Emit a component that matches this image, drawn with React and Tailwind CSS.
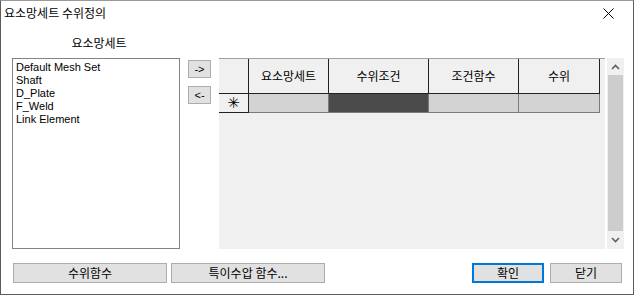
import React from 'react';

const font = { fontFamily: '"Noto Sans CJK KR", "Noto Sans", sans-serif' };

const items = ['Default Mesh Set', 'Shaft', 'D_Plate', 'F_Weld', 'Link Element'];
const cols = [
  { label: '요소망세트', w: 'w-[80px]', cell: 'bg-[#d3d3d3]' },
  { label: '수위조건', w: 'w-[100px]', cell: 'bg-[#4b4b4b]' },
  { label: '조건함수', w: 'w-[90px]', cell: 'bg-[#d3d3d3]' },
  { label: '수위', w: 'w-[81px]', cell: 'bg-[#d3d3d3]' },
];

function SmallBtn({ children }) {
  return (
    <div className="w-[23px] h-[18px] bg-[#e1e1e1] border border-[#adadad] flex items-center justify-center text-[11px] leading-none text-black font-['Liberation_Sans',sans-serif]">
      {children}
    </div>
  );
}

function Btn({ children, w, primary }) {
  return (
    <div
      className={
        'h-[20px] bg-[#e1e1e1] flex items-center justify-center text-[12px] text-black ' +
        w +
        (primary ? ' border-2 border-[#0078d7]' : ' border border-[#adadad]')
      }
    >
      {children}
    </div>
  );
}

export default function App() {
  return (
    <div className="w-[634px] h-[295px] bg-white border-x border-b border-x-[#5c5c5c] border-b-[#5c5c5c] border-t border-t-[#9a9a9a] flex flex-col text-black" style={font}>
      <div className="h-[24px] flex items-center justify-between pl-[3px] pr-[19px] shrink-0">
        <span className="text-[12px] leading-none">요소망세트 수위정의</span>
        <svg width="11" height="11" viewBox="0 0 11 11">
          <path d="M0.5 0.5 L10.5 10.5 M10.5 0.5 L0.5 10.5" stroke="#000" strokeWidth="1" />
        </svg>
      </div>

      <div className="flex items-start pl-[11px]">
        <div className="w-[168px] flex flex-col pt-[10px]">
          <div className="h-[16px] text-[12px] leading-[16px] text-center pl-[6px]">요소망세트</div>
          <div className="mt-[7px] h-[191px] border border-[#828282] bg-white pl-[3px] pt-[2px] text-[11px] leading-[13px] font-['Liberation_Sans',sans-serif]">
            {items.map((it) => (
              <div key={it}>{it}</div>
            ))}
          </div>
        </div>

        <div className="ml-[8px] mt-[35px] flex flex-col gap-[8px]">
          <SmallBtn>-&gt;</SmallBtn>
          <SmallBtn>&lt;-</SmallBtn>
        </div>

        <div className="ml-[8px] mt-[33px] flex">
          <div className="w-[386px] h-[191px] bg-[#f0f0f0]">
            <div className="flex h-[36px] border-t border-t-[#a0a0a0]">
              <div className="w-[30px] h-full border-r border-b border-[#222]" />
              {cols.map((c) => (
                <div key={c.label} className={c.w + ' h-full border-r border-b border-[#222] flex items-center justify-center text-[12px]'}>
                  {c.label}
                </div>
              ))}
            </div>
            <div className="flex h-[19px]">
              <div className="w-[30px] h-full border-r border-b border-[#222] flex items-center justify-center text-[15px] leading-none font-['DejaVu_Sans',sans-serif]">
                ✳
              </div>
              {cols.map((c) => (
                <div key={c.label} className={c.w + ' h-full border-r border-b border-[#7a7a7a] ' + c.cell} />
              ))}
            </div>
          </div>
          <div className="ml-[2px] w-[17px] h-[191px] bg-[#f0f0f0] flex flex-col">
            <div className="h-[17px] flex items-center justify-center">
              <svg width="9" height="6" viewBox="0 0 9 6">
                <path d="M1 5 L4.5 1.5 L8 5" stroke="#606060" strokeWidth="1.6" fill="none" />
              </svg>
            </div>
            <div className="mx-[1px] h-[156px] bg-[#cdcdcd]" />
            <div className="flex-1 flex items-center justify-center">
              <svg width="9" height="6" viewBox="0 0 9 6">
                <path d="M1 1 L4.5 4.5 L8 1" stroke="#606060" strokeWidth="1.6" fill="none" />
              </svg>
            </div>
          </div>
        </div>
      </div>

      <div className="flex items-center mt-[14px] pl-[12px] pr-[11px]">
        <Btn w="w-[154px]">수위함수</Btn>
        <div className="ml-[4px]">
          <Btn w="w-[154px]">특이수압 함수...</Btn>
        </div>
        <div className="ml-auto flex gap-[6px]">
          <Btn w="w-[72px]" primary>확인</Btn>
          <Btn w="w-[72px]">닫기</Btn>
        </div>
      </div>
    </div>
  );
}
